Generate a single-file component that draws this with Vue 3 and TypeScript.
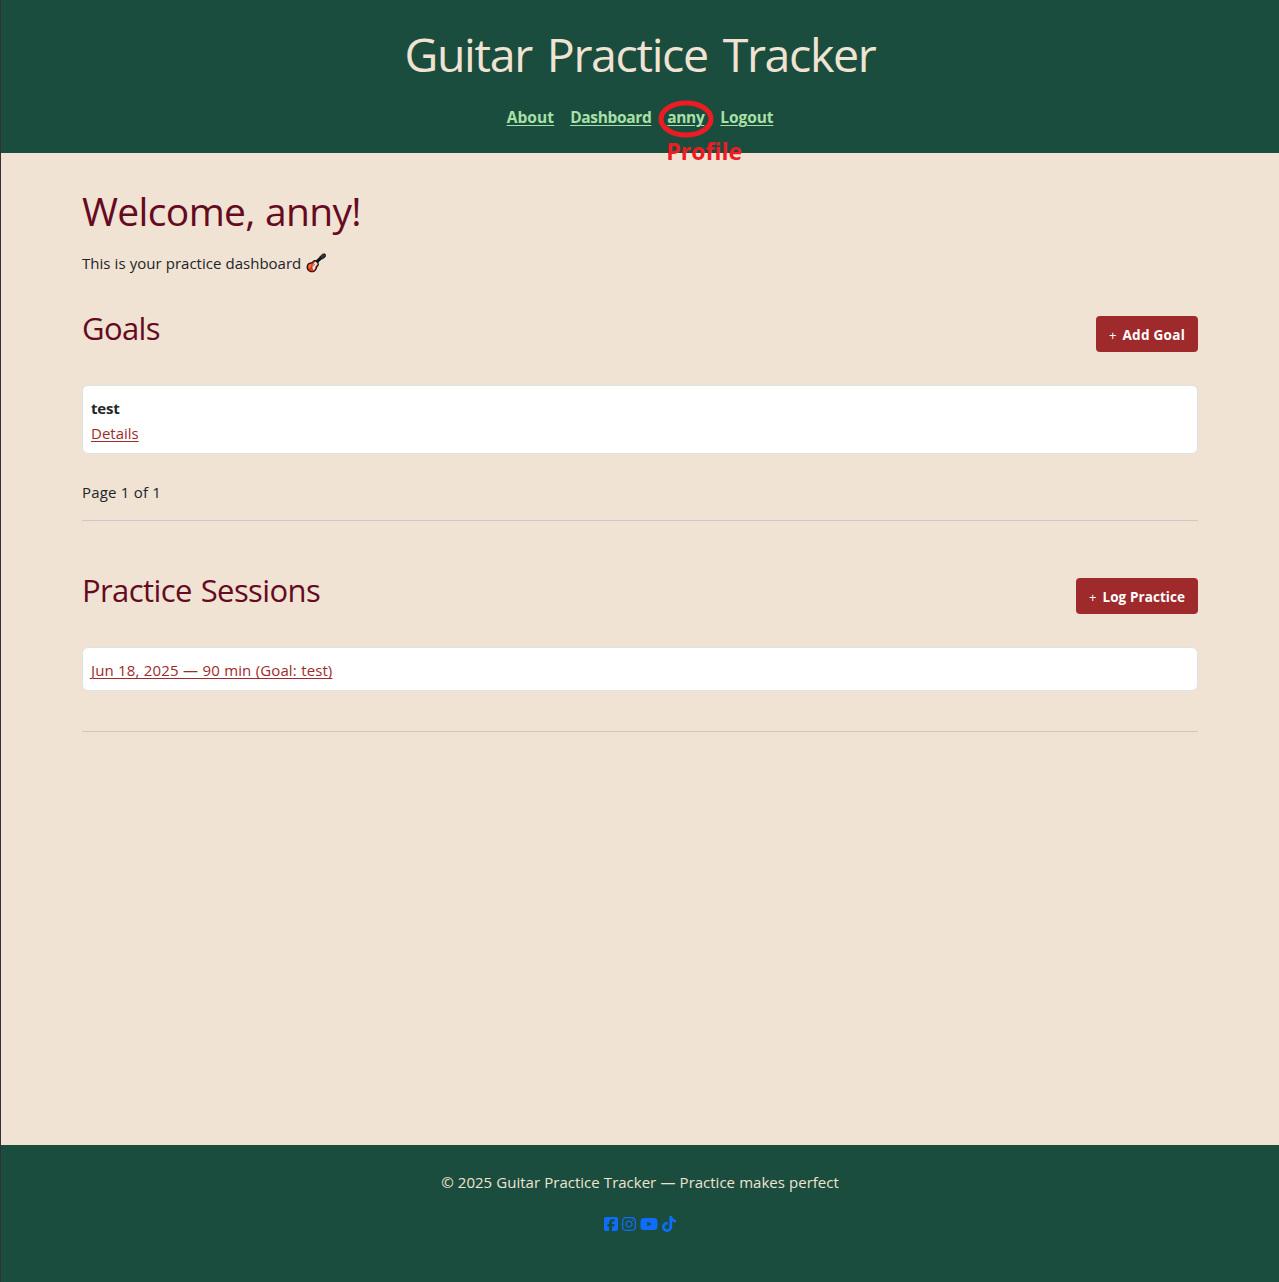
<script setup lang="ts">
interface NavLink { label: string; spacing: string; marked?: boolean }
interface SocialIcon { name: string; width: number; path: string }

const links: NavLink[] = [
  { label: 'About', spacing: '0.1px' },
  { label: 'Dashboard', spacing: '-0.35px' },
  { label: 'anny', spacing: '-0.4px', marked: true },
  { label: 'Logout', spacing: '-0.1px' },
]

const social: SocialIcon[] = [
  { name: 'Facebook', width: 448, path: 'M64 32C28.7 32 0 60.7 0 96V416c0 35.3 28.7 64 64 64h98.200V334.200H109.400V256h52.800V222.300c0-87.100 39.400-127.500 125-127.500c16.200 0 44.200 3.200 55.700 6.400V172c-6-.6-16.500-1-29.600-1c-42 0-58.200 15.900-58.200 57.200V256h83.600l-14.400 78.200H255V480H384c35.300 0 64-28.700 64-64V96c0-35.300-28.700-64-64-64H64z' },
  { name: 'Instagram', width: 448, path: 'M224.100 141c-63.600 0-114.900 51.300-114.900 114.900s51.300 114.900 114.900 114.900S339 319.500 339 255.900 287.700 141 224.100 141zm0 189.600c-41.100 0-74.700-33.500-74.700-74.700s33.500-74.700 74.700-74.700 74.700 33.500 74.700 74.700-33.600 74.700-74.700 74.700zm146.400-194.300c0 14.900-12 26.800-26.800 26.800-14.900 0-26.800-12-26.800-26.800s12-26.800 26.800-26.800 26.800 12 26.800 26.800zm76.100 27.200c-1.700-35.900-9.900-67.700-36.200-93.900-26.200-26.200-58-34.400-93.900-36.200-37-2.100-147.900-2.100-184.900 0-35.800 1.700-67.600 9.900-93.900 36.100s-34.400 58-36.200 93.900c-2.100 37-2.100 147.900 0 184.900 1.700 35.900 9.900 67.700 36.200 93.900s58 34.400 93.900 36.200c37 2.100 147.900 2.100 184.900 0 35.900-1.700 67.700-9.900 93.900-36.200 26.200-26.200 34.400-58 36.200-93.900 2.100-37 2.100-147.800 0-184.800zM398.800 388c-7.800 19.600-22.900 34.700-42.600 42.600-29.500 11.700-99.500 9-132.100 9s-102.700 2.600-132.100-9c-19.600-7.800-34.700-22.900-42.600-42.600-11.700-29.500-9-99.500-9-132.100s-2.600-102.700 9-132.100c7.800-19.600 22.900-34.700 42.600-42.600 29.500-11.700 99.500-9 132.100-9s102.700-2.600 132.100 9c19.600 7.800 34.700 22.900 42.600 42.600 11.700 29.500 9 99.500 9 132.100s2.700 102.700-9 132.100z' },
  { name: 'YouTube', width: 576, path: 'M549.700 124.100c-6.300-23.700-24.800-42.300-48.300-48.600C458.800 64 288 64 288 64S117.200 64 74.600 75.500c-23.500 6.300-42 24.900-48.300 48.600-11.400 42.900-11.400 132.300-11.400 132.300s0 89.400 11.400 132.300c6.300 23.700 24.800 41.500 48.300 47.800C117.200 448 288 448 288 448s170.800 0 213.400-11.500c23.500-6.300 42-24.200 48.300-47.800 11.400-42.900 11.400-132.300 11.400-132.300s0-89.400-11.400-132.300zm-317.500 213.500V175.200l142.700 81.200-142.700 81.200z' },
  { name: 'TikTok', width: 448, path: 'M448 209.900a210.100 210.100 0 0 1-122.800-39.300V349.400A162.600 162.600 0 1 1 185 188.300V278.200a74.600 74.600 0 1 0 52.200 71.200V0h88a121.200 121.200 0 0 0 1.900 22.200a122.200 122.200 0 0 0 53.900 80.200A121.400 121.400 0 0 0 448 122.800z' },
]
</script>

<template>
  <div class="page">
    <header class="site-header">
      <h1 class="brand">Guitar Practice Tracker</h1>
      <nav class="nav">
        <span v-for="link in links" :key="link.label" class="nav-item">
          <a href="#" :style="{ letterSpacing: link.spacing }">{{ link.label }}</a>
          <template v-if="link.marked">
            <svg class="ring" viewBox="0 0 56 38" aria-hidden="true">
              <ellipse cx="28" cy="19" rx="25" ry="16" fill="none" stroke="#ed1c24" stroke-width="5" />
            </svg>
            <span class="note">Profile</span>
          </template>
        </span>
      </nav>
    </header>

    <main class="content">
      <h2 class="welcome">Welcome, anny!</h2>
      <p class="intro">
        <span>This is your practice dashboard</span>
        <svg class="guitar" viewBox="0 0 20 20" role="img" aria-label="guitar">
          <path d="M9.500 10 16 3.800" stroke="#151515" stroke-width="3.200" />
          <path d="m13.800 4 2.600-2.800 2.400-.4 1 1.400-.8 2-2.800 1.800z" fill="#303437" stroke="#111" stroke-width=".8" />
          <path d="M1.500 12.200c.6-2.100 2.600-2.100 4.300-2.500 1.100-.3 1.300-1.700 2.600-2 1.600-.3 4.100 1.900 3.900 3.700-.2 1.500-1.300 1.600-1.700 2.900-.5 2-.6 3.100-2.500 4-2.100 1-4.900.3-6.200-1.600-.9-1.200-.9-2.900-.4-4.500z" fill="#e83a13" stroke="#151515" stroke-width="1.200" />
          <path d="M3 12.200c.6-1.100 1.600-.9 2.600-1.200l-1.800 4.200c-1-.8-1.400-1.700-.8-3z" fill="#ff793f" />
          <path d="m6 13.600 3-4.900c1.400.3 2.400 1.400 2.500 2.600-1.200 1.200-2.100 1.700-2.400 3.500-.2 1.200-.8 2-1.700 2.400z" fill="#eee9e7" />
          <path d="m5.800 14.500 3.400-3.700" stroke="#55565a" stroke-width=".8" />
        </svg>
      </p>

      <section class="goals">
        <div class="section-head">
          <h3>Goals</h3>
          <button type="button" class="action add"><span>+</span><b>Add Goal</b></button>
        </div>
        <div class="card goal-card">
          <strong>test</strong>
          <a href="#" class="details">Details</a>
        </div>
        <p class="pager">Page 1 of 1</p>
      </section>

      <section class="sessions">
        <div class="section-head">
          <h3>Practice Sessions</h3>
          <button type="button" class="action log"><span>+</span><b>Log Practice</b></button>
        </div>
        <div class="card session-card">
          <a href="#" class="session">Jun 18, 2025 — 90 min (Goal: test)</a>
        </div>
      </section>
    </main>

    <footer class="site-footer">
      <p>© 2025 Guitar Practice Tracker — Practice makes perfect</p>
      <div class="social">
        <a v-for="icon in social" :key="icon.name" href="#" :aria-label="icon.name">
          <svg :viewBox="`0 0 ${icon.width} 512`" :width="icon.width / 32" height="16"><path :d="icon.path" fill="currentColor" /></svg>
        </a>
      </div>
    </footer>
  </div>
</template>

<style>
body { margin: 0; background: #f0e3d3; }
</style>

<style scoped>
* { box-sizing: border-box; }
h1, h2, h3, p { margin: 0; font-weight: 400; }
.page {
  display: flex;
  flex-direction: column;
  height: 1282px;
  border-left: 1px solid #343136;
  overflow: hidden;
  background: #f0e3d3;
  color: #212529;
  font-family: "Open Sans", "Noto Sans", sans-serif;
  font-size: 15px;
  line-height: 24px;
}
.site-header { height: 153px; flex: none; padding-top: 25px; background: #1b4d3e; text-align: center; }
.brand { font-size: 46.500px; line-height: 58px; color: #f0e3d3; letter-spacing: -1.35px; word-spacing: 4.200px; }
.nav { display: flex; justify-content: center; gap: 16px; margin-top: 22px; font-size: 15.5px; }
.nav-item { position: relative; }
.nav a { color: #a8e0a8; font-weight: 700; text-decoration-thickness: 1px; text-underline-offset: 2px; }
.ring { position: absolute; left: -9px; top: -5px; width: 56px; height: 38px; z-index: 1; }
.note { position: absolute; left: -1px; top: 30px; z-index: 1; color: #ed1c24; font-size: 23px; font-weight: 700; line-height: 32px; letter-spacing: 0; }
.content { flex: 1; padding: 35px 81px 0; }
.welcome { font-size: 39px; line-height: 48px; margin-top: -1px; color: #660a22; letter-spacing: -0.65px; word-spacing: 0.6px; }
.intro { display: flex; align-items: center; gap: 5px; margin-top: 16px; letter-spacing: 0; word-spacing: 0.3px; }
.guitar { width: 20px; height: 20px; }
.section-head { display: flex; justify-content: space-between; align-items: flex-start; height: 69px; }
.section-head h3 { font-size: 31px; line-height: 38px; color: #660a22; margin-top: -7px; letter-spacing: -0.6px; word-spacing: 1.5px; }
.goals { margin-top: 41px; }
.action { display: flex; align-items: center; gap: 6px; height: 36px; padding: 1px 0 0 13px; border: 0; border-radius: 4px; background: #9e2a2b; color: #fff; font: 13px/20px "Open Sans", sans-serif; white-space: nowrap; }
.action b { font-size: 13.5px; }
.add { width: 102px; }
.add b { letter-spacing: 0.3px; }
.log { width: 122px; }
.log b { letter-spacing: 0.08px; }
.card { display: flex; flex-direction: column; align-items: flex-start; gap: 1px; padding: 10px 8px 8px; border: 1px solid #dee2e6; border-radius: 6px; background: #fff; }
.goal-card { height: 69px; }
.goal-card strong { letter-spacing: -0.2px; }
.session-card { height: 44px; }
.card a { color: #9e2a2b; text-decoration-thickness: 1px; text-underline-offset: 2px; }
.session { letter-spacing: 0.1px; word-spacing: 0.4px; }
.pager { margin-top: 26px; height: 41px; border-bottom: 1px solid #cbc8c5; letter-spacing: 0.2px; }
.sessions { margin-top: 57px; height: 154px; border-bottom: 1px solid #cbc8c5; }
.site-footer { flex: none; height: 137px; padding-top: 25px; background: #1b4d3e; color: #f0e3d3; text-align: center; letter-spacing: 0; word-spacing: 0.3px; }
.social { display: flex; justify-content: center; gap: 4.2px; margin-top: 22px; color: #0d6efd; }
.social a { display: flex; color: inherit; }
</style>
